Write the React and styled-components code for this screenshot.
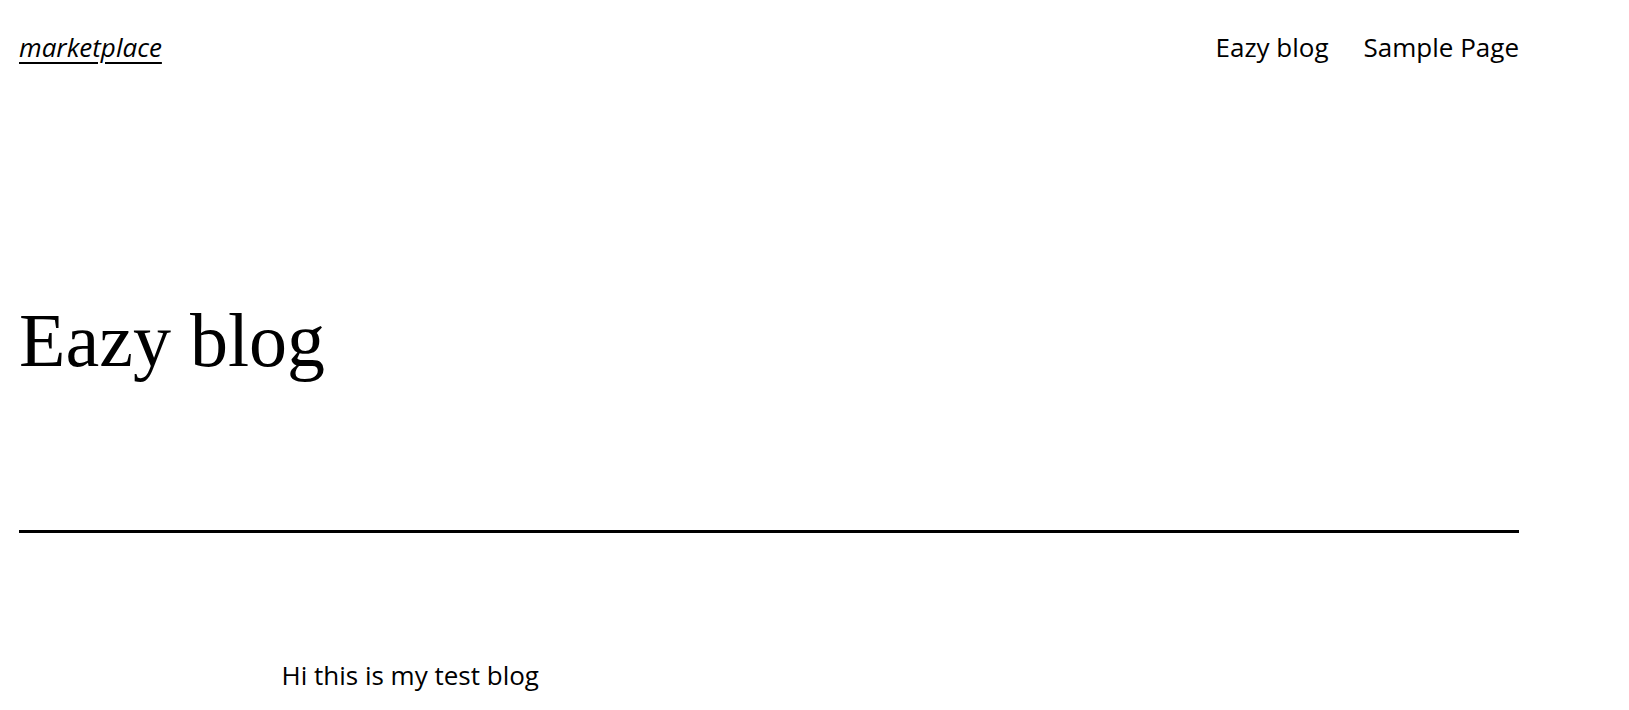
import React from "react";
import styled, { createGlobalStyle } from "styled-components";

const GlobalStyle = createGlobalStyle`
  html, body {
    margin: 0;
    padding: 0;
    background: #ffffff;
    color: #000000;
  }
  body {
    font-family: "Open Sans", "Noto Sans", sans-serif;
  }
`;

const Page = styled.div`
  box-sizing: border-box;
  width: 1519px;
  padding-left: 19px;
`;

const Header = styled.header`
  display: flex;
  justify-content: space-between;
  align-items: baseline;
  padding-top: 28px;
  line-height: 39px;
  font-size: 26px;
`;

const SiteTitle = styled.a`
  font-style: italic;
  color: #000;
  text-decoration: underline;
  text-decoration-thickness: 2px;
  text-underline-offset: 5px;
`;

const Nav = styled.nav`
  display: flex;
  gap: 35px;
`;

const NavLink = styled.a`
  color: #000;
  text-decoration: none;
`;

const PostTitle = styled.h1`
  margin: 235px 0 0;
  font-family: "Liberation Serif", "Times New Roman", serif;
  font-weight: 300;
  font-size: 76px;
  line-height: 77px;
`;

const Separator = styled.hr`
  margin: 151px 0 0;
  border: none;
  height: 3px;
  background: #000;
`;

const PostContent = styled.div`
  max-width: 975px;
  margin: 123px auto 0;
  font-size: 26px;
  line-height: 39px;
`;

const Paragraph = styled.p`
  margin: 0;
`;

export default function App() {
  return (
    <>
      <GlobalStyle />
      <Page>
        <Header>
          <SiteTitle href="#">marketplace</SiteTitle>
          <Nav>
            <NavLink href="#">Eazy blog</NavLink>
            <NavLink href="#">Sample Page</NavLink>
          </Nav>
        </Header>
        <PostTitle>Eazy blog</PostTitle>
        <Separator />
        <PostContent>
          <Paragraph>Hi this is my test blog</Paragraph>
        </PostContent>
      </Page>
    </>
  );
}
